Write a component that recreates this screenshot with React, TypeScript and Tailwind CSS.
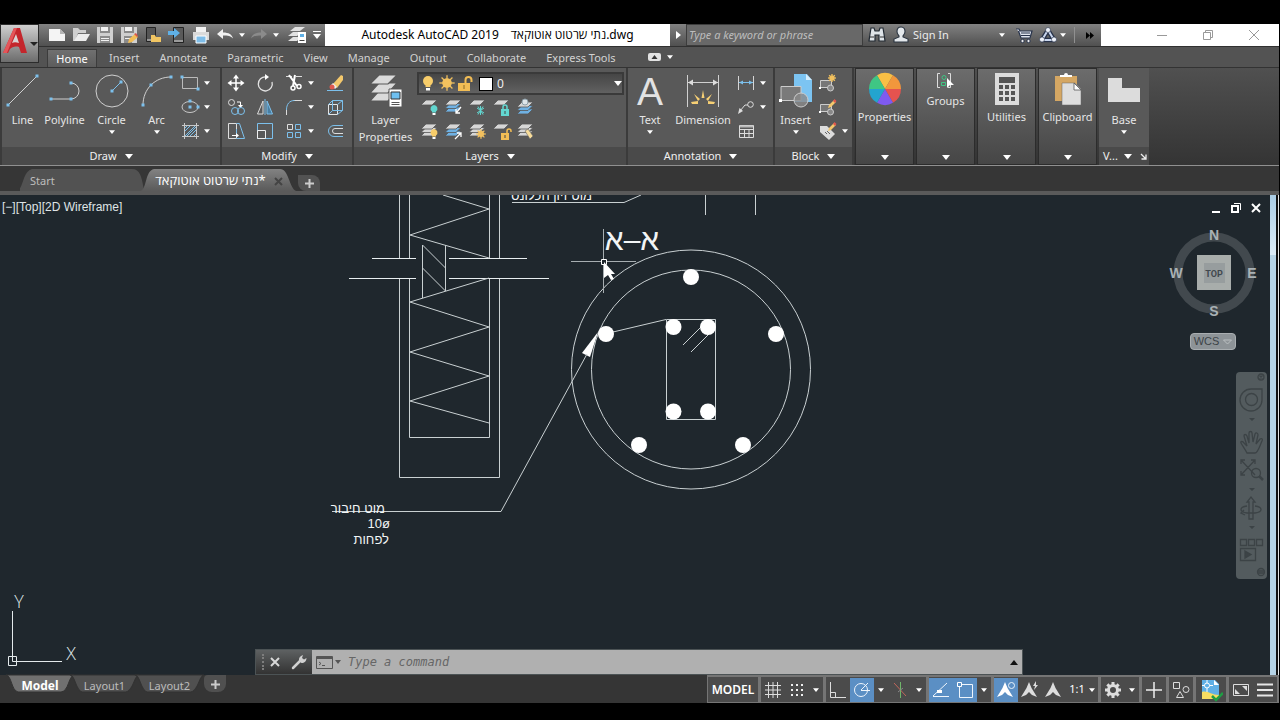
import type { ReactNode } from "react";

const Caret = ({ size = 6 }: { size?: number }) => (
  <svg width={size} height={size === 8 ? 5 : 4} viewBox="0 0 8 5" className="shrink-0 fill-white">
    <path d="M0 0h8L4 5z" />
  </svg>
);

// 24x24 icon box shared by the toolbars
const Glyph = ({ children }: { children: ReactNode }) => (
  <svg width="24" height="24" viewBox="0 0 24 24" fill="none" className="shrink-0">
    {children}
  </svg>
);

const IconButton = ({ label, children }: { label: string; children: ReactNode }) => (
  <button type="button" aria-label={label} className="flex h-6 w-6 shrink-0 items-center justify-center">
    <Glyph>{children}</Glyph>
  </button>
);

const CaretButton = ({ label }: { label: string }) => (
  <button type="button" aria-label={label} className="flex h-6 w-2.5 shrink-0 items-center justify-center">
    <Caret />
  </button>
);

const Sheets = ({ n = 3, blue = false, lift = 0 }: { n?: number; blue?: boolean; lift?: number }) => (
  <g stroke="#555" strokeWidth="0.8">
    {n > 2 && <path d="M9 12h11l-5 5H4z" fill={blue ? "#6fb1e3" : "#d6d6d6"} transform={`translate(0 ${lift})`} />}
    {n > 1 && <path d="M9 8.5h11l-5 5H4z" fill={blue ? "#6fb1e3" : "#d6d6d6"} transform={`translate(0 ${lift})`} />}
    <path d="M9 5h11l-5 5H4z" fill="#d6d6d6" transform={`translate(0 ${lift})`} />
  </g>
);

const Bulb = ({ fill }: { fill: string }) => (
  <g>
    <path d="M17 10a3.6 3.6 0 0 0-2 6.5v1h4v-1A3.6 3.6 0 0 0 17 10z" fill={fill} />
    <path d="M15.5 18h3v2h-3z" fill="#fff" />
  </g>
);

const Sun = ({ cx, cy, r }: { cx: number; cy: number; r: number }) => (
  <g stroke="#f2c15f" strokeWidth="1.3">
    <circle cx={cx} cy={cy} r={r} fill="#f2c15f" stroke="none" />
    {[0, 45, 90, 135].map((a) => (
      <path key={a} d={`M${cx - r * 1.6} ${cy}h${r * 3.2}`} transform={`rotate(${a} ${cx} ${cy})`} />
    ))}
  </g>
);

const Lock = ({ fill, open = false }: { fill: string; open?: boolean }) => (
  <g>
    <path d="M12 14h8v7h-8z" fill={fill} />
    <path d={open ? "M18 14v-2a2 2 0 0 1 4 0v1" : "M14 14v-2a2 2 0 0 1 4 0v2"} stroke={fill} strokeWidth="1.5" />
    <path d="M16 16v3" stroke="#444" />
  </g>
);

const Dots = ({ points }: { points: [number, number][] }) => (
  <g fill="#7cc0ec">
    {points.map(([x, y]) => (
      <rect key={`${x}-${y}`} x={x - 1.5} y={y - 1.5} width="3" height="3" />
    ))}
  </g>
);

/* ---------- Title bar ---------- */

const QuickAccess = () => (
  <div className="flex items-center pl-1.5">
    <IconButton label="New">
      <path d="M4 6h11l5 5v7H4z" fill="#f4f4f4" />
      <path d="M15 6v5h5z" fill="#b5b5b5" />
    </IconButton>
    <IconButton label="Open">
      <path d="M4 18V5h5l2 2h6v3H9l-3 8z" fill="#cfcfcf" />
      <path d="M9 11h12l-4 7H5z" fill="#ececec" />
    </IconButton>
    <IconButton label="Save">
      <path d="M4 4h16v16H4z" fill="#d0d0d0" />
      <path d="M7 4h10v6H7zM7 13h10v7H7z" fill="#8b8b8b" />
      <path d="M8 4h7v4H8zM8 15h8v1H8zM8 17h8v1H8z" fill="#f1f1f1" />
    </IconButton>
    <IconButton label="Save As">
      <path d="M4 4h16v16H4z" fill="#d0d0d0" />
      <path d="M7 4h10v6H7zM7 13h8v7H7z" fill="#8b8b8b" />
      <path d="M8 4h7v4H8zM8 15h6v1H8z" fill="#f1f1f1" />
      <path d="M11 20l1-4 6-5 3 3-6 5z" fill="#f2bd55" />
      <path d="M17 11l2-1 2 3-1 1z" fill="#d8574b" />
    </IconButton>
    <IconButton label="Open from Web and Mobile">
      <path d="M5.5 4.5h9v14h-9z" fill="#555" stroke="#222" />
      <path d="M6 17h8" stroke="#ddd" />
      <path d="M10 19v-7h4l1 2h5v5z" fill="#f2c663" />
    </IconButton>
    <IconButton label="Save to Web and Mobile">
      <path d="M8.5 4.5h10v15h-10z" fill="#5a5a5a" stroke="#222" />
      <path d="M9 18h9" stroke="#ddd" />
      <path d="M3 8h6V5l6 5-6 5v-3H3z" fill="#5fb0e6" />
    </IconButton>
    <IconButton label="Plot">
      <path d="M7 4h10v5H7z" fill="#f2f2f2" />
      <path d="M4 9h16v8H4z" fill="#dadada" />
      <path d="M7 13h10v7H7z" fill="#7fbde8" stroke="#fff" />
    </IconButton>
    <IconButton label="Undo">
      <path d="M4 11l6-5v3.5c6 0 9 2 10 6-2-2.5-5-3-10-3V16z" fill="#f1f1f1" />
    </IconButton>
    <CaretButton label="Undo history" />
    <IconButton label="Redo">
      <path d="M20 11l-6-5v3.5c-6 0-9 2-10 6 2-2.5 5-3 10-3V16z" fill="#8b8b8b" />
    </IconButton>
    <CaretButton label="Redo history" />
    <div className="w-1" />
    <IconButton label="Layer properties">
      <path d="M10 4h10l-5 4H5zM8 9h9l-5 4H3zM8 14h8l-4 4H3z" fill="#e2e2e2" />
      <path d="M13 9h8v11h-8z" fill="#fff" />
      <path d="M15 11h4v3h-4z" fill="#5fb0e6" />
      <path d="M14.5 17.5h5" stroke="#444" />
    </IconButton>
    <button
      type="button"
      aria-label="Customize toolbar"
      className="flex h-5 w-4 flex-col items-center justify-center gap-0.5"
    >
      <span className="h-px w-2 bg-white" />
      <Caret size={8} />
    </button>
  </div>
);

const TitleBar = () => (
  <div className="flex h-[23px] border-b border-[#303030] bg-linear-to-b from-[#828282] to-[#505050]">
    <QuickAccess />
    <h1 className="flex min-w-0 flex-1 items-center justify-center gap-3 whitespace-pre bg-white text-xs text-black">
      <span>Autodesk AutoCAD 2019</span>
      <span>נתי שרטוט אוטוקאד.dwg</span>
    </h1>
    <button type="button" aria-label="Expand search" className="flex w-4 items-center justify-center">
      <svg width="5" height="8" className="fill-white">
        <path d="M0 0l5 4-5 4z" />
      </svg>
    </button>
    <input
      type="text"
      aria-label="Search"
      placeholder="Type a keyword or phrase"
      className="w-[177px] border border-[#3c3c3c] bg-[#686868] px-0.5 text-[11px] italic text-white outline-none placeholder:text-[#bdbdbd]"
    />
    <div className="flex w-[238px] items-center pl-0.5">
      <IconButton label="Find">
        <path d="M6 5h3l1 3h4l1-3h3l1 6 1 7h-6v-6h-4v6H4l1-7z" fill="#dfe4e8" stroke="#222a33" strokeWidth="1.2" />
        <path d="M5 14h4M15 14h4" stroke="#333" />
      </IconButton>
      <button type="button" className="flex h-5 flex-1 items-center">
        <Glyph>
          <path
            d="M12 4c-3 0-4 2-4 4.5S9.5 12 10 13v1l-5 2v3h14v-3l-5-2v-1c.5-1 2-2 2-4.5S15 4 12 4z"
            fill="#e4e8ec"
            stroke="#2a3440"
            strokeWidth="1.1"
          />
        </Glyph>
        <span className="text-[11px] text-[#ececec]">Sign In</span>
        <span className="ml-auto">
          <Caret />
        </span>
      </button>
      <div className="w-[7px]" />
      <IconButton label="App store">
        <path d="M4 6h3l1 2h12l-2 7H9L6.5 8" fill="#dfe4ee" stroke="#27324a" strokeWidth="1.2" />
        <path d="M9 10h9M9 12.5h9" stroke="#27324a" />
        <circle cx="10.5" cy="18" r="1.7" fill="#eee" stroke="#27324a" />
        <circle cx="16.5" cy="18" r="1.7" fill="#eee" stroke="#27324a" />
      </IconButton>
      <IconButton label="Autodesk services">
        <path d="M12 7l-6 10h12z" stroke="#27324a" strokeWidth="4.5" strokeLinejoin="round" />
        <path d="M12 7l-6 10h12z" stroke="#c9d6ee" strokeWidth="2" strokeLinejoin="round" />
        <g fill="#eef2fa" stroke="#27324a" strokeWidth="0.6">
          <circle cx="12" cy="7" r="2.5" />
          <circle cx="6" cy="16.5" r="2.5" />
          <circle cx="18" cy="16.5" r="2.5" />
        </g>
      </IconButton>
      <Caret />
      <span className="ml-2 h-4 w-px bg-[#909090]" />
      <button type="button" aria-label="More tools" className="flex w-[26px] justify-center pl-1">
        <svg width="8" height="7" className="fill-black">
          <path d="M0 0l4 3.5L0 7zM4 0l4 3.5L4 7z" />
        </svg>
      </button>
    </div>
    <div className="flex w-[178px] justify-end bg-white pr-0.5">
      <button type="button" aria-label="Minimize" className="flex w-[46px] items-center justify-center">
        <svg width="12" height="12" stroke="#999" fill="none">
          <path d="M1 6.5h10" />
        </svg>
      </button>
      <button type="button" aria-label="Restore" className="flex w-[46px] items-center justify-center">
        <svg width="12" height="12" stroke="#999" fill="none">
          <path d="M1.5 3.5h7v7h-7zM3.5 3.5v-2h7v7h-2" />
        </svg>
      </button>
      <button type="button" aria-label="Close" className="flex w-[46px] items-center justify-center">
        <svg width="12" height="12" stroke="#999" fill="none">
          <path d="M1 1l10 10M11 1L1 11" />
        </svg>
      </button>
    </div>
  </div>
);

const tabs = ["Insert", "Annotate", "Parametric", "View", "Manage", "Output", "Collaborate", "Express Tools"];

const RibbonTabs = () => (
  <nav className="flex h-[21px] items-end border-b border-[#333] bg-[#535353] pl-2 text-[11px] text-[#d2d2d2]">
    <button
      type="button"
      className="h-[18px] w-[50px] border border-b-0 border-[#3c3c3c] bg-linear-to-b from-[#707070] to-[#5c5c5c] leading-[18px] text-white"
    >
      Home
    </button>
    <div className="flex pl-0.5">
      {tabs.map((t) => (
        <button type="button" key={t} className="h-[18px] px-2.5 leading-[18px]">
          {t}
        </button>
      ))}
    </div>
    <button type="button" aria-label="Minimize ribbon" className="ml-[22px] flex h-5 items-center gap-1.5">
      <svg width="13" height="8">
        <rect width="13" height="8" rx="2" fill="#e2e2e2" />
        <path d="M3.5 6l3-4 3 4z" fill="#333" />
      </svg>
      <Caret />
    </button>
  </nav>
);

/* ---------- Ribbon panels ---------- */

const Panel = ({ title, className, children }: { title: string; className: string; children: ReactNode }) => (
  <section className={`flex shrink-0 flex-col border-r-2 border-[#3b3b3b] bg-[#595959] ${className}`}>
    <div className="flex flex-1 pt-[3px]">{children}</div>
    <button
      type="button"
      className="flex h-[18px] items-center justify-center gap-2 bg-[#4a4a4a] pt-px text-[11px] text-[#f0f0f0]"
    >
      {title}
      <Caret size={8} />
    </button>
  </section>
);

const BigButton = ({
  label,
  className,
  caret = false,
  children,
}: {
  label: ReactNode;
  className: string;
  caret?: boolean;
  children: ReactNode;
}) => (
  <button
    type="button"
    className={`flex shrink-0 flex-col items-center pt-[3px] text-[11px] text-[#e6e6e6] ${className}`}
  >
    <svg width="34" height="34" viewBox="0 0 34 34" fill="none" stroke="#d0d0d0" className="overflow-visible">
      {children}
    </svg>
    <span className="mt-[3px] leading-[17px]">{label}</span>
    {caret && (
      <span className="mt-0.5">
        <Caret />
      </span>
    )}
  </button>
);

const SmallRow = ({ label, caret = false, children }: { label: string; caret?: boolean; children: ReactNode }) => (
  <div className="flex">
    <IconButton label={label}>{children}</IconButton>
    {caret && <CaretButton label={`${label} options`} />}
  </div>
);

const DrawPanel = () => (
  <Panel title="Draw" className="w-[222px] border-l-2">
    <BigButton label="Line" className="w-[41px]">
      <path d="M2 31L31 2" />
      <g stroke="none">
        <Dots points={[[2, 31], [31, 2]]} />
      </g>
    </BigButton>
    <BigButton label="Polyline" className="w-[43px]">
      <path d="M3 25h20a8 8 0 0 0 0-16" />
      <g stroke="none">
        <Dots points={[[3, 25], [23, 25], [23, 9]]} />
      </g>
    </BigButton>
    <BigButton label="Circle" caret className="w-[51px]">
      <circle cx="17" cy="17" r="16" />
      <path d="M17 17l9-9" stroke="#7cc0ec" />
      <g stroke="none">
        <Dots points={[[17, 17], [26, 8]]} />
      </g>
    </BigButton>
    <BigButton label="Arc" caret className="w-[39px]">
      <path d="M3 31C3 15 15 3 31 3" />
      <g stroke="none">
        <Dots points={[[3, 31], [11, 11], [31, 3]]} />
      </g>
    </BigButton>
    <div className="flex flex-col pl-0.5">
      <SmallRow label="Rectangle" caret>
        <path d="M4.5 6.5h15v11h-15z" stroke="#bbb" />
        <Dots points={[[4, 6], [20, 18]]} />
      </SmallRow>
      <SmallRow label="Ellipse" caret>
        <ellipse cx="12" cy="12" rx="8" ry="5.5" stroke="#c8c8c8" />
        <Dots points={[[12, 12], [20, 12], [12, 6]]} />
      </SmallRow>
      <SmallRow label="Hatch" caret>
        <path d="M6.5 4v16M18.5 4v16M4 6.5h17M4 17.5h17" stroke="#c8c8c8" />
        <path d="M7 12l5-5M7 17L17 7M12 17l6-6M16 17l2-2M9 17l9-9M7 9l2-2" stroke="#7cc0ec" />
      </SmallRow>
    </div>
  </Panel>
);

const ModifyPanel = () => (
  <Panel title="Modify" className="w-[132px]">
    <div className="grid auto-rows-[24px] grid-cols-[24px_24px_36px_24px] gap-x-[5px] pl-0.5">
      <SmallRow label="Move">
        <path d="M12 5v14M5 12h14" stroke="#fff" strokeWidth="1.5" />
        <path d="M12 3.5l3 4H9zM12 20.5l3-4H9zM3.5 12l4-3v6zM20.5 12l-4-3v6z" fill="#fff" />
      </SmallRow>
      <SmallRow label="Rotate">
        <path d="M13 6a7 7 0 1 0 6 5" stroke="#e3e3e3" strokeWidth="1.3" />
        <path d="M12 3l4 3-4 3z" fill="#fff" />
      </SmallRow>
      <SmallRow label="Trim" caret>
        <path d="M4 5.5h6M14 5.5h6" stroke="#ddd" />
        <path d="M7 4l8 11M13 4l-2 11" stroke="#fff" strokeWidth="2" />
        <circle cx="11" cy="17" r="2" stroke="#fff" strokeWidth="1.5" />
        <circle cx="17" cy="15.5" r="2" stroke="#fff" strokeWidth="1.5" />
      </SmallRow>
      <SmallRow label="Erase">
        <path d="M10 13l8-9 2 1v4l-6 8z" fill="#f4c86c" />
        <path d="M10 12l4 4-2 2-4-4z" fill="#eee" />
        <circle cx="9" cy="16" r="2.5" fill="#e0584e" />
        <path d="M4 19.5h16" stroke="#7cc0ec" />
      </SmallRow>
      <SmallRow label="Copy">
        <circle cx="7.5" cy="7.5" r="3" stroke="#ddd" />
        <path d="M13 7h3.5v4" stroke="#fff" />
        <path d="M14 10h5l-2.5 3z" fill="#fff" />
        <circle cx="11" cy="16" r="3.5" stroke="#7cc0ec" />
        <circle cx="17" cy="16" r="3.5" stroke="#7cc0ec" />
      </SmallRow>
      <SmallRow label="Mirror">
        <path d="M10 6v13H4.5z" stroke="#ddd" />
        <path d="M14 6v13h5.5z" stroke="#7cc0ec" fill="#4a7fa3" />
        <path d="M12 4v16" stroke="#7cc0ec" />
      </SmallRow>
      <SmallRow label="Fillet" caret>
        <path d="M4.5 20v-5M11 5.5h9" stroke="#ddd" />
        <path d="M4.5 15c0-6 3-9.5 8-9.5" stroke="#7cc0ec" />
      </SmallRow>
      <SmallRow label="Explode">
        <path d="M5.5 9.5h9v10h-9z" stroke="#e5e5e5" />
        <path d="M5.5 9.5l4-4h10l-5 4M19.5 5.5v10l-5 4M9.5 5.5v10h10M9.5 15.5l-4 4" stroke="#7cc0ec" />
      </SmallRow>
      <SmallRow label="Stretch">
        <path d="M12.5 19.5h-8v-15h8z" stroke="#ddd" />
        <path d="M12.5 4.5h3l5 15h-8M12.5 19v-9" stroke="#7cc0ec" />
        <path d="M8 16.5h5" stroke="#fff" />
        <path d="M12 14l3 2.5-3 2.5z" fill="#fff" />
      </SmallRow>
      <SmallRow label="Scale">
        <path d="M4.5 4.5h15v15h-15z" stroke="#7cc0ec" />
        <path d="M4.5 11.5h8v8h-8z" stroke="#eee" />
      </SmallRow>
      <SmallRow label="Array" caret>
        <path d="M5.5 5.5h5v5h-5z" stroke="#ddd" />
        <path d="M13.5 5.5h5v5h-5zM5.5 13.5h5v5h-5zM13.5 13.5h5v5h-5z" stroke="#7cc0ec" />
      </SmallRow>
      <SmallRow label="Offset">
        <path d="M20 6.5h-9a5.5 5.5 0 0 0 0 11h9" stroke="#7cc0ec" />
        <path d="M20 9.5h-8a2.5 2.5 0 0 0 0 5h8" stroke="#ddd" />
      </SmallRow>
    </div>
  </Panel>
);

const LayersPanel = () => (
  <Panel title="Layers" className="w-[274px]">
    <BigButton
      label={
        <>
          Layer
          <br />
          Properties
        </>
      }
      className="w-[63px]"
    >
      <g stroke="#595959" fill="#dadada" strokeWidth="1.2">
        <path d="M10 17h18l-9 10H1z" />
        <path d="M10 9h18l-9 10H1z" />
        <path d="M10 1h18l-9 9H1z" />
      </g>
      <path d="M20 15h13v18H20z" fill="#fff" stroke="#595959" />
      <path d="M22 18h9v7h-9z" fill="#6fc0f0" stroke="#333" />
      <path d="M22.5 28.5h8M22.5 30.5h8" stroke="#555" />
    </BigButton>
    <div className="flex flex-1 flex-col pt-px pr-0.5">
      <div className="flex h-[23px] items-center border-2 border-[#3a3a3a] bg-linear-to-b from-[#464646] to-[#616161]">
        <svg width="66" height="20" fill="none" className="shrink-0">
          <circle cx="9" cy="7" r="5" fill="#f8cd6a" />
          <path d="M6.5 10h5v3h-5z" fill="#f8cd6a" />
          <path d="M7 14h4v2.500H7z" fill="#fff" />
          <Sun cx={28} cy={9} r={4.8} />
          <path d="M39 9h12v8H39z" fill="#f2bd55" />
          <path d="M46.5 9V6a3 3 0 0 1 6 0v2" stroke="#f2bd55" strokeWidth="2" />
          <path d="M45 11v4" stroke="#8a6a28" />
        </svg>
        <span className="-ml-1.5 h-3.5 w-3.5 shrink-0 border border-black bg-white" />
        <select
          aria-label="Layer"
          className="h-full flex-1 appearance-none bg-transparent pl-1 text-xs text-[#eee] outline-none"
        >
          <option>0</option>
        </select>
        <Caret size={8} />
      </div>
      <div className="flex">
        <IconButton label="Layer off">
          <Sheets n={1} />
          <Bulb fill="#62d6d0" />
        </IconButton>
        <IconButton label="Isolate layer">
          <Sheets blue />
          <path d="M20 12l-5 6M15 14v4h4" stroke="#fff" strokeWidth="1.3" />
        </IconButton>
        <IconButton label="Freeze layer">
          <Sheets n={1} />
          <path d="M15.5 11v9M12 13l7 5M19 13l-7 5M13 11.5l5 8M18 11.5l-5 8" stroke="#62d6d0" />
        </IconButton>
        <IconButton label="Lock layer">
          <Sheets n={1} />
          <Lock fill="#62d6d0" />
        </IconButton>
        <IconButton label="Make current">
          <Sheets blue lift={2} />
          <circle cx="12" cy="7" r="3" fill="#dfe6ea" stroke="#8ea0aa" />
        </IconButton>
      </div>
      <div className="flex">
        <IconButton label="Turn all layers on">
          <Sheets />
          <Bulb fill="#f8cd6a" />
        </IconButton>
        <IconButton label="Unisolate layer">
          <Sheets blue />
          <path d="M14 20l6-6M20 18v-4h-4" stroke="#fff" strokeWidth="1.3" />
        </IconButton>
        <IconButton label="Thaw all layers">
          <Sheets />
          <Sun cx={16} cy={15} r={3} />
        </IconButton>
        <IconButton label="Unlock layer">
          <Sheets n={1} />
          <Lock fill="#f2bd55" open />
        </IconButton>
        <IconButton label="Match layer">
          <Sheets />
          <path d="M12 12l3-2 5 7-3 3z" fill="#f7dc9a" stroke="#666" strokeWidth="0.6" />
        </IconButton>
      </div>
    </div>
  </Panel>
);

const AnnotationPanel = () => (
  <Panel title="Annotation" className="w-[147px]">
    <BigButton label="Text" caret className="w-[44px]">
      <text
        x="17"
        y="31"
        fontSize="39"
        textAnchor="middle"
        fill="#e2e2e2"
        stroke="none"
        className="font-['Liberation_Sans',sans-serif]"
      >
        A
      </text>
    </BigButton>
    <BigButton label="Dimension" className="w-[62px]">
      <path d="M1.5 1v32M32.5 1v32M2 8.5h30" />
      <path d="M2 8.5l5-3v6zM32 8.5l-5-3v6z" fill="#ddd" stroke="none" />
      <g fill="#f6cf74" stroke="none">
        <path d="M17 16l1.5 8h-3zM8 20l6 5-2 2zM26 20l-6 5 2 2zM5 28l7-1v3H6zM29 28l-7-1v3h6z" />
      </g>
    </BigButton>
    <div className="flex flex-col">
      <SmallRow label="Linear" caret>
        <path d="M4.5 5v14M19.5 5v14" stroke="#d5d5d5" />
        <path d="M5 11.5h14" stroke="#7cc0ec" />
        <path d="M5 11.5l4-2v4zM19 11.5l-4-2v4z" fill="#7cc0ec" />
      </SmallRow>
      <SmallRow label="Leader" caret>
        <path d="M6 16l5-6h3" stroke="#ddd" />
        <path d="M4 19l1.5-6 3.5 3z" fill="#ddd" />
        <circle cx="16.5" cy="9.5" r="2.8" stroke="#ddd" />
      </SmallRow>
      <SmallRow label="Table">
        <path d="M5.5 6.5h14v12h-14zM5.5 10.5h14M5.5 14.5h14M10.5 10v8M15 10v8" stroke="#ddd" />
        <path d="M6 6.5h13v2H6z" fill="#bbb" />
      </SmallRow>
    </div>
  </Panel>
);

const BlockPanel = () => (
  <Panel title="Block" className="w-[79px]">
    <BigButton label="Insert" caret className="w-[41px]">
      <path d="M15 0h13l5 6v22H15z" fill="#7cc4f2" stroke="none" />
      <path d="M27 0v6h6z" fill="#d6edfb" stroke="none" />
      <path d="M2 12.5h20v14H2z" fill="#7a7a7a" stroke="#ccc" />
      <circle cx="22" cy="26" r="7" fill="#8a8a8acc" stroke="#ccc" />
      <path d="M0 25h3v3H0z" fill="#fff" stroke="none" />
    </BigButton>
    <div className="flex flex-col">
      <SmallRow label="Create block">
        <path d="M4.5 9.5h11v7h-11z" fill="#777" stroke="#ccc" />
        <circle cx="14.5" cy="17" r="3" fill="#888" stroke="#ccc" />
        <path d="M3 16h2v2H3z" fill="#fff" />
        <Sun cx={16} cy={7} r={2.5} />
      </SmallRow>
      <SmallRow label="Edit block">
        <path d="M4.5 9.5h11v7h-11z" fill="#777" stroke="#ccc" />
        <circle cx="14.5" cy="17" r="3" fill="#888" stroke="#ccc" />
        <path d="M3 16h2v2H3z" fill="#fff" />
        <path d="M12 13l1-3 5-5 2 2-5 5z" fill="#f4c86c" />
        <path d="M17 6l1.5-2 2 2L19 8z" fill="#e0584e" />
      </SmallRow>
      <SmallRow label="Edit attributes" caret>
        <path d="M4 7h7l8 8-6 6-9-8z" fill="#dcdcdc" />
        <path d="M9 13l2 2M11 12l3 3" stroke="#666" />
        <path d="M12 12l1-3 5-5 2 2-5 5z" fill="#f4c86c" />
        <path d="M17 5l1.5-2 2 2L19 7z" fill="#e0584e" />
      </SmallRow>
    </div>
  </Panel>
);

const FoldedPanel = ({ label, children }: { label: string; children: ReactNode }) => (
  <button
    type="button"
    className="flex w-[59px] shrink-0 flex-col items-center border border-[#2c2c2c] bg-linear-to-b from-[#6c6c6c] to-[#464646] pt-[3px] text-[11px] text-[#e6e6e6]"
  >
    {children}
    <span className="mt-0.5 leading-[17px]">{label}</span>
    <span className="mt-auto flex pb-1">
      <Caret size={8} />
    </span>
  </button>
);

const wheel = ["#f8bf45", "#f2973c", "#e5534f", "#7f5af0", "#23a4cf", "#3fc684"];

const Ribbon = () => (
  <div className="flex h-[98px] border-b border-[#909090] bg-linear-to-b from-[#505050] to-[#343434]">
    <DrawPanel />
    <ModifyPanel />
    <LayersPanel />
    <AnnotationPanel />
    <BlockPanel />
    <div className="flex gap-0.5 pl-px">
      <FoldedPanel label="Properties">
        <svg width="34" height="34" viewBox="-17 -17 34 34">
          {wheel.map((c, i) => (
            <path key={c} d="M0 0L0 -16A16 16 0 0 1 13.86 -8z" fill={c} transform={`rotate(${i * 60 - 30})`} />
          ))}
        </svg>
      </FoldedPanel>
      <FoldedPanel label="Groups">
        <svg width="20" height="18" fill="none">
          <path d="M4 1.5H1.5v14H4M12 1.5h2.500v14H12" stroke="#ddd" />
          <circle cx="8" cy="5.5" r="2" stroke="#3fc684" />
          <path d="M5.5 10.5h4v3h-4z" stroke="#3fc684" />
          <path d="M11 6l7 7h-4l-3 3z" fill="#fff" />
        </svg>
      </FoldedPanel>
      <FoldedPanel label="Utilities">
        <svg width="34" height="34">
          <path d="M5 1h24v32H5z" fill="#dcdcdc" />
          <path d="M9 5h16v6H9z" fill="#555" />
          {[13, 19, 25].map((y) =>
            [9, 15, 21].map((x) => <rect key={`${x}${y}`} x={x} y={y} width="4" height="4" fill="#555" />)
          )}
        </svg>
      </FoldedPanel>
      <FoldedPanel label="Clipboard">
        <svg width="34" height="34">
          <path d="M4 4h22v25H4z" fill="#d5a763" />
          <path d="M9 5V3h4a2 2 0 0 1 4 0h4v2z" fill="#fff" />
          <path d="M11 11h13l6 6v16H11z" fill="#dedede" stroke="#666" strokeWidth="0.5" />
          <path d="M23 11v7h7z" fill="#fff" stroke="#555" strokeWidth="0.8" />
        </svg>
      </FoldedPanel>
      <section className="flex w-[50px] flex-col bg-[#595959]">
        <div className="flex flex-1 pt-[3px]">
          <BigButton label="Base" caret className="w-full">
            <path d="M1 4h14v10h18v14H1z" fill="#dcdcdc" stroke="none" />
          </BigButton>
        </div>
        <div className="flex h-[18px] items-center bg-[#4a4a4a] pt-px pl-1 text-[11px] text-[#f0f0f0]">
          <button type="button" className="flex items-center gap-1.5">
            V...
            <Caret size={8} />
          </button>
          <button type="button" aria-label="View settings" className="ml-auto pr-0.5">
            <svg width="7" height="7" stroke="#eee" fill="none">
              <path d="M1 1l5 5M6 1.5V6H1.5" strokeWidth="1.3" />
            </svg>
          </button>
        </div>
      </section>
    </div>
  </div>
);

/* ---------- File tabs ---------- */

const FileTabs = () => (
  <div className="flex h-[29px] items-end border-b-4 border-[#5a5a5a] bg-[#363636] pl-5">
    <button type="button" className="relative flex h-[22px] w-[124px] items-center pt-0.5 pl-[10px] text-[11px] text-[#bdbdbd]">
      <svg className="absolute inset-0 h-full w-full" viewBox="0 0 124 22" preserveAspectRatio="none">
        <path d="M-3 22C4 19 2 3 12 0H112c8 0 10 8 12 22z" fill="#525252" />
      </svg>
      <span className="relative">Start</span>
    </button>
    <div className="relative flex h-[22px] w-[150px] items-center justify-center gap-2 pt-0.5 text-[13px] text-white">
      <svg className="absolute inset-0 h-full w-full overflow-visible" viewBox="0 0 150 22" preserveAspectRatio="none">
        <defs>
          <linearGradient id="activeTab" x2="0" y2="1">
            <stop stopColor="#828282" />
            <stop offset="1" stopColor="#5a5a5a" />
          </linearGradient>
        </defs>
        <path d="M-3 22C3 19 1 2 10 0H136c9 0 9 19 16 22z" fill="url(#activeTab)" />
      </svg>
      <button type="button" className="relative whitespace-nowrap">
        נתי שרטוט אוטוקאד*
      </button>
      <button type="button" aria-label="Close tab" className="relative">
        <svg width="9" height="9" stroke="#444" strokeWidth="2">
          <path d="M1 1l7 7M8 1L1 8" />
        </svg>
      </button>
    </div>
    <button
      type="button"
      aria-label="New tab"
      className="ml-1 flex h-4 w-[22px] items-center justify-center self-end rounded-tr-lg rounded-bl-lg bg-[#525252]"
    >
      <svg width="9" height="9" stroke="#ccc" strokeWidth="2">
        <path d="M4.5 0v9M0 4.500h9" />
      </svg>
    </button>
  </div>
);

/* ---------- Drawing area ---------- */

const bars: [number, number][] = [
  [691, 82],
  [776, 139],
  [743, 250],
  [639, 250],
  [606, 139],
  [673.5, 132],
  [708, 132],
  [673.5, 216.5],
  [708, 216.5],
];

const Drawing = () => (
  <svg
    className="absolute inset-0 h-full w-full font-['Liberation_Sans',sans-serif]"
    fill="none"
    stroke="#c9d0d2"
    role="img"
    aria-label="Pile section"
  >
    {/* pile elevation */}
    <path d="M399.5 0v63.5M409.5 0v63.5M489.5 0v63.5M499.5 0v63.5" />
    <path d="M399.5 83.5v199h100v-199M409.5 83.5v159h80v-159" />
    <path d="M372 63.5h44M449 63.5h78M349 83.5h67M449 83.5h100" stroke="#e8eef0" />
    <path d="M443 0l46 14-79 26 79 23M489 83l-79 24 79 25-79 25 79 24-79 25 79 22" />
    <path d="M422.5 50v53M445.5 50v46M422.5 50l23 23M422.5 73l23 23" />

    {/* section A-A */}
    <circle cx="691" cy="174.5" r="119.5" />
    <circle cx="691" cy="174.5" r="99.5" />
    <path d="M666.5 124.5h49v100h-49zM613 137l53-12.5M683 150l18-18M691 157l18-18" />
    <g fill="#fff" stroke="none">
      {bars.map(([x, y]) => (
        <circle key={`${x}-${y}`} cx={x} cy={y} r="8" />
      ))}
      <path d="M598 137l-16 21 8 4z" />
    </g>
    <path d="M587 159l-86 157.5H332M512 7.5h112L641 0M705.5 0v20M755.5 0v20" />

    {/* labels */}
    <g fill="#f2f5f6" stroke="none" fontSize="13">
      <text x="592" y="5" textAnchor="end">
        מוט זיון הכלונס
      </text>
      <text x="385" y="318" textAnchor="end">
        מוט חיבור
      </text>
      <text x="390" y="333" textAnchor="end">
        10ø
      </text>
      <text x="389" y="349" textAnchor="end">
        לפחות
      </text>
      <text x="632" y="55" textAnchor="middle" fontSize="30">
        א–א
      </text>
    </g>

    {/* crosshair */}
    <path d="M571 66.5h65M603.5 34v64" stroke="#a7aeb1" />
    <path d="M601.5 64.5h5v5h-5z" fill="#1f272d" stroke="#fff" />
    <path d="M604 67v16l4-3 3 5 3-1-3-5h4z" fill="#fff" stroke="none" />
  </svg>
);

const UcsIcon = () => (
  <svg
    width="84"
    height="84"
    className="absolute bottom-0 left-0 font-['Open_Sans',sans-serif] font-light"
    fill="none"
    stroke="#e4eaec"
  >
    <path d="M12.5 20v50.5H62M8.5 65.5h8v9h-8z" />
    <g fill="#dfe5e7" stroke="none" fontSize="18" textAnchor="middle">
      <text x="19" y="17">Y</text>
      <text x="71" y="69">X</text>
    </g>
  </svg>
);

const ViewCube = () => (
  <div className="absolute top-2 right-[13px] flex w-[88px] flex-col items-center gap-3">
    <div className="flex w-full justify-end gap-2.5">
      <button type="button" aria-label="Minimize drawing">
        <svg width="10" height="10" fill="#fff">
          <path d="M1 8h8v2H1z" />
        </svg>
      </button>
      <button type="button" aria-label="Restore drawing">
        <svg width="10" height="10" fill="none" stroke="#fff">
          <path d="M3 .5h6.5V7" />
          <path d="M1 3h6v6H1z" strokeWidth="2" />
        </svg>
      </button>
      <button type="button" aria-label="Close drawing" className="-mr-1">
        <svg width="10" height="10" stroke="#fff" strokeWidth="2">
          <path d="M1 1l8 8M9 1L1 9" />
        </svg>
      </button>
    </div>
    <svg width="88" height="96" fill="none" className="shrink-0 font-['Liberation_Sans',sans-serif]">
      <circle cx="45" cy="48" r="36" stroke="#42494e" strokeWidth="9" />
      <path d="M28 30h34v35H28z" fill="#a8adab" />
      <path d="M35 38h21v20H35z" fill="#979d9e" />
      <g fill="#a9b1b4" fontSize="14" fontWeight="bold" textAnchor="middle">
        <text x="45" y="15">N</text>
        <text x="7" y="53">W</text>
        <text x="83" y="53">E</text>
        <text x="45" y="91">S</text>
      </g>
      <text
        x="45"
        y="52"
        fill="#41484e"
        fontSize="9"
        fontWeight="bold"
        textAnchor="middle"
        className="font-['Roboto',sans-serif]"
      >
        TOP
      </text>
    </svg>
    <button
      type="button"
      className="flex h-[17px] w-[46px] items-center justify-center gap-1 rounded border border-[#a9aeb1] bg-[#8d9397] font-['Liberation_Sans',sans-serif] text-[11px] text-[#3c4347]"
    >
      WCS
      <svg width="9" height="6" stroke="#b9bec0" fill="none">
        <path d="M.5 1h8L4.5 5z" />
      </svg>
    </button>
  </div>
);

const NavBar = () => (
  <div className="absolute top-[177px] right-[3px] w-[31px] rounded-sm bg-[#535b5e]">
    <svg width="31" height="207" fill="none" stroke="#3c4346" strokeWidth="1.3">
      <circle cx="25" cy="5" r="3" />
      <path d="M23.5 3.5l3 3M26.5 3.5l-3 3" />
      <path d="M15 17h11v11a11 11 0 1 1-11-11z" />
      <circle cx="15.5" cy="27.5" r="6" />
      <path d="M13 46h6l-3 3zM13 116h6l-3 3zM13 154h6l-3 3z" fill="#3c4346" stroke="none" />
      <path d="M11 81c-2-4-5-8-6-10s2-2 3 0l3 3-3-10c0-2 2-2 3 0l2 7v-10c0-2 3-2 3 0l1 9 2-8c1-2 3-1 3 1l-2 9 4-5c2-1 3 0 2 2-2 4-4 12-7 12z" />
      <path d="M5 88l14 15M19 88L5 103M5 92v-4h4M15 88h4v4M5 99v4h4" />
      <circle cx="20" cy="101" r="4.5" />
      <path d="M23 104l4 4" strokeWidth="2.5" />
      <path d="M13 147v-17h-2l4-5 4 5h-2v17z" />
      <path d="M11 134c-8 1-8 6 0 7h8c8-1 8-6 0-7M8 138l-3 3 4 2" />
      <path d="M4.5 167.5h6v6h-6zM12.5 167.5h6v6h-6zM20.5 167.5h6v6h-6zM4.5 176.5h15v12h-15z" />
      <path d="M9 179l6 3.5-6 3.5z" fill="#3c4346" />
      <circle cx="25" cy="200" r="3.5" />
      <path d="M22 199h6M22 201h6" />
    </svg>
  </div>
);

const CommandLine = () => (
  <div className="absolute right-[247px] bottom-0 left-[255px] flex h-[26px] border border-[#4c5355] bg-[#b0b0b0]">
    <div className="flex w-14 items-center gap-1.5 bg-linear-to-b from-[#5e6162] to-[#333] pr-[5px] pl-1.5">
      <span className="h-4 border-l-2 border-dotted border-[#7d7d7d]" />
      <button type="button" aria-label="Close command line">
        <svg width="10" height="10" stroke="#d8d8d8" strokeWidth="2">
          <path d="M1 1l8 8M9 1L1 9" />
        </svg>
      </button>
      <button type="button" aria-label="Customize" className="ml-auto">
        <svg width="16" height="16" fill="none">
          <path d="M2 14l7-7" stroke="#d0d0d0" strokeWidth="2.5" strokeLinecap="round" />
          <path d="M8 7c-.5-3 1-5 4-6l-1 3 2 1.5L15.5 4c0 3-2 5-5 5z" fill="#d0d0d0" />
        </svg>
      </button>
    </div>
    <button type="button" aria-label="Recent commands" className="flex items-center gap-0.5 pl-1">
      <svg width="17" height="13" fill="none" stroke="#555">
        <path d="M.5.5h16v12H.5z" />
        <path d="M1 2h15" strokeWidth="2" />
        <path d="M3 6l2 1.5L3 9M6 9.5h3" />
      </svg>
      <svg width="6" height="4" className="fill-[#555]">
        <path d="M0 0h6L3 4z" />
      </svg>
    </button>
    <input
      type="text"
      aria-label="Command"
      placeholder="Type a command"
      className="flex-1 bg-transparent pl-[7px] font-['DejaVu_Sans_Mono',monospace] text-xs italic text-black outline-none placeholder:text-[#666]"
    />
    <button type="button" aria-label="Command history" className="flex w-3 items-center">
      <svg width="8" height="5">
        <path d="M0 5h8L4 0z" fill="#111" />
      </svg>
    </button>
  </div>
);

const Canvas = () => (
  <main className="flex min-h-[480px] flex-1">
    <div className="relative flex-1 overflow-hidden bg-[#1f272d]">
      <Drawing />
      <p className="absolute top-1 left-0.5 font-['Liberation_Sans',sans-serif] text-xs text-[#dfe4e6]">
        [−][Top][2D Wireframe]
      </p>
      <ViewCube />
      <NavBar />
      <UcsIcon />
      <CommandLine />
    </div>
    <div className="w-1.5 bg-[#b5d3e6]">
      <div className="h-[60px] bg-linear-to-b from-[#a9cbe3] to-[#dcecf7]" />
    </div>
    <div className="w-[3px] border-r border-[#e5e5e5] bg-[#111]" />
  </main>
);

/* ---------- Status bar ---------- */

const LayoutTab = ({ label, active = false }: { label: string; active?: boolean }) => (
  <button
    type="button"
    className={
      active
        ? "relative h-[17px] w-16 text-xs font-bold text-white"
        : "relative h-[17px] w-[65px] text-[11px] text-[#bcbcbc]"
    }
  >
    <svg className="absolute inset-0 h-full w-full overflow-visible" viewBox="0 0 64 17" preserveAspectRatio="none">
      <path d="M-2 0C4 1 3 15 10 17H53c8-1 7-15 13-17z" fill={active ? "#707070" : "#505050"} stroke="#333" />
    </svg>
    <span className="relative block leading-[21px]">{label}</span>
  </button>
);

const Group = ({ children }: { children: ReactNode }) => (
  <div className="flex items-center border border-r-2 border-[#757575] bg-[#4b4b4b]">{children}</div>
);

const Toggle = ({ label, on = false, children }: { label: string; on?: boolean; children: ReactNode }) => (
  <button
    type="button"
    aria-label={label}
    aria-pressed={on}
    className={on ? "flex h-6 w-6 justify-center bg-[#5b8fc4]" : "flex h-6 w-6 justify-center"}
  >
    <Glyph>{children}</Glyph>
  </button>
);

const More = ({ label }: { label: string }) => (
  <button type="button" aria-label={label} className="flex h-6 w-[14px] items-center justify-center">
    <Caret />
  </button>
);

const person = "M11 4l2.5 6 5.5 9-5-2-3-3-3 3-5 2 5.5-9z";

const StatusBar = () => (
  <footer className="flex h-7 bg-[#353535]">
    <div className="flex pl-2">
      <LayoutTab label="Model" active />
      <LayoutTab label="Layout1" />
      <LayoutTab label="Layout2" />
      <button
        type="button"
        aria-label="New layout"
        className="ml-0.5 flex h-[17px] w-[22px] items-center justify-center rounded-tl-sm rounded-br-lg rounded-bl-lg bg-[#505050] pt-0.5"
      >
        <svg width="9" height="9" stroke="#ccc" strokeWidth="2">
          <path d="M4.5 0v9M0 4.500h9" />
        </svg>
      </button>
    </div>
    <div className="ml-auto flex border-t border-[#757575]">
      <Group>
        <button type="button" className="w-[50px] text-xs font-semibold text-white">
          MODEL
        </button>
      </Group>
      <Group>
        <Toggle label="Grid">
          <path d="M7.5 4v16M12 4v16M16.5 4v16M4 7.5h16M4 12h16M4 16.5h16" stroke="#ddd" />
        </Toggle>
        <Toggle label="Snap">
          <g fill="#eee">
            {[6, 11, 16].map((y) => [6, 11, 16].map((x) => <rect key={`${x}${y}`} x={x} y={y} width="2" height="2" />))}
          </g>
        </Toggle>
        <More label="Snap settings" />
      </Group>
      <Group>
        <Toggle label="Ortho">
          <path d="M4.5 4v15.5H20M4.5 14.5h5v5" stroke="#ddd" />
        </Toggle>
        <Toggle label="Polar" on>
          <circle cx="11" cy="12" r="6.5" stroke="#eef5fc" />
          <path d="M11 12.5h9M11 12l7-7" stroke="#eef5fc" />
        </Toggle>
        <More label="Polar settings" />
        <Toggle label="Isodraft">
          <path d="M6 5l12 13" stroke="#c2665a" />
          <path d="M12.5 4v16" stroke="#6fb56a" />
          <path d="M10 14l5-4" stroke="#888" />
        </Toggle>
        <More label="Isodraft settings" />
      </Group>
      <Group>
        <Toggle label="Tracking" on>
          <path d="M4 18.5h16M4 18L18 5" stroke="#eef5fc" />
          <path d="M8 12h5v3H8z" fill="#fff" />
        </Toggle>
        <Toggle label="Object snap" on>
          <path d="M6.5 6.5h13v13h-13z" stroke="#eef5fc" />
          <path d="M4.5 4.5h4v4h-4z" fill="#5b8fc4" stroke="#fff" />
        </Toggle>
        <More label="Object snap settings" />
      </Group>
      <Group>
        <Toggle label="Annotation visibility" on>
          <path d={person} fill="#fff" />
          <circle cx="17.5" cy="7.5" r="3" stroke="#e8f2fb" />
        </Toggle>
        <Toggle label="Auto scale">
          <path d={person} fill="#ddd" />
          <path d="M18 3l-3 5h2l-1 4 4-5h-2z" fill="#ddd" />
        </Toggle>
        <Toggle label="Annotation scale">
          <path d={person} fill="#ddd" />
        </Toggle>
        <button type="button" className="flex h-6 w-8 items-center justify-center gap-1 text-[11px] text-white">
          1:1
          <Caret />
        </button>
      </Group>
      <Group>
        <Toggle label="Workspace">
          <circle cx="12" cy="12" r="4.5" stroke="#ddd" strokeWidth="3" />
          <g stroke="#ddd" strokeWidth="3">
            {[0, 45, 90, 135].map((a) => (
              <path key={a} d="M12 4v3M12 17v3" transform={`rotate(${a} 12 12)`} />
            ))}
          </g>
        </Toggle>
        <More label="Workspace settings" />
      </Group>
      <Group>
        <Toggle label="Annotation monitor">
          <path d="M12 4v16M4 12h16" stroke="#eee" strokeWidth="1.5" />
        </Toggle>
      </Group>
      <Group>
        <Toggle label="Isolate objects">
          <path d="M4.5 4.5h6v6h-6zM7.5 19.5h7l-3.5-6z" stroke="#ddd" />
          <circle cx="17" cy="11.5" r="3" stroke="#ddd" />
        </Toggle>
      </Group>
      <Group>
        <div className="px-[3px]">
          <Toggle label="Graphics performance">
            <path d="M3 2h13l4 4v15H3z" fill="#5fb0e6" />
            <path d="M15 2v5h5z" fill="#fff" />
            <path d="M3 14c5-2 9 3 17 3v4H3z" fill="#f6dc62" />
            <path d="M8 2v12M3 7.5h11" stroke="#fff" />
            <circle cx="8" cy="7.5" r="2.5" fill="#5fb0e6" stroke="#fff" />
            <path d="M13 18l4 4 7-7" stroke="#1f9e45" strokeWidth="2.5" />
          </Toggle>
        </div>
      </Group>
      <Group>
        <Toggle label="Clean screen">
          <path d="M4.5 6.5h15v11h-15z" stroke="#ddd" />
          <path d="M13 8h5v5zM6 16h5l-5-5z" fill="#ddd" />
        </Toggle>
        <Toggle label="Customization">
          <path d="M4 6.5h16M4 12h16M4 17.5h16" stroke="#e6e6e6" strokeWidth="2" />
        </Toggle>
      </Group>
    </div>
  </footer>
);

export default function App() {
  return (
    <div className="flex min-h-screen flex-col bg-black pt-6 pr-px pb-[17px] font-['Noto_Sans','Open_Sans','DejaVu_Sans',sans-serif]">
      <header className="flex">
        <div className="flex w-[39px] shrink-0 flex-col bg-[#535353]">
          <button
            type="button"
            aria-label="Application menu"
            className="flex h-[39px] items-center border border-[#2c2c2c] bg-linear-to-b from-[#cfcfcf] to-[#6d6d6d]"
          >
            <svg width="37" height="36">
              <path d="M2 27L13 2h6l7 25h-6l-2-6c-4-1-7 0-9 2l-2 4z" fill="#c4262c" />
              <path d="M11 17l4-9 3 9c-3-1-5-1-7 0z" fill="#d9d4d4" />
              <path d="M2 27L13 2h3L8 22l-2 5z" fill="#e4565a" />
              <path d="M29 16h8l-4 4z" fill="#222" />
            </svg>
          </button>
          <div className="flex-1 border-b border-[#333]" />
        </div>
        <div className="min-w-0 flex-1">
          <TitleBar />
          <RibbonTabs />
        </div>
      </header>
      <Ribbon />
      <FileTabs />
      <Canvas />
      <StatusBar />
    </div>
  );
}
